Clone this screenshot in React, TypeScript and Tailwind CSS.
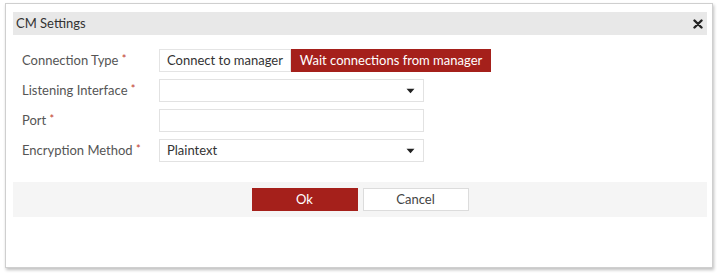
import React from 'react'

function Caret() {
  return (
    <svg width="9" height="6" viewBox="0 0 9 6" className="shrink-0">
      <path d="M0.5 0.8 L8.5 0.8 L4.5 5.2 Z" fill="#222" />
    </svg>
  )
}

function Label({ text }: { text: string }) {
  return (
    <div className="w-[146px] shrink-0 pl-[9px] text-[13px] text-[#555]">
      {text} <span className="text-[#c0392b] text-[11px] relative -top-[2px]">*</span>
    </div>
  )
}

export default function App() {
  return (
    <div className="w-[720px] h-[275px] bg-white pt-[3px] pl-[5px]" style={{ fontFamily: 'Lato, "Open Sans", sans-serif' }}>
      <div className="w-[708px] h-[265px] border border-[#cfcfcf] bg-white shadow-[1px_2px_3px_rgba(0,0,0,0.25)] pl-[7px] pr-[5px] pt-[8px]">
        {/* header */}
        <div className="h-[23px] bg-[#e8e8e8] flex items-center justify-between pl-[3px] pr-[4px]">
          <span className="text-[13px] text-[#333]">CM Settings</span>
          <svg width="10" height="10" viewBox="0 0 10 10">
            <path d="M1.5 1.5 L8.5 8.5 M8.5 1.5 L1.5 8.5" stroke="#222" strokeWidth="2.4" strokeLinecap="round" />
          </svg>
        </div>

        {/* form */}
        <div className="flex flex-col gap-[7px] pt-[14px]">
          <div className="flex items-center h-[23px]">
            <Label text="Connection Type" />
            <div className="flex h-[23px] text-[13px]">
              <div className="w-[132px] border border-[#e4e4e4] bg-white text-[#333] flex items-center justify-center">
                Connect to manager
              </div>
              <div className="w-[200px] bg-[#a5201b] text-white flex items-center justify-center">
                Wait connections from manager
              </div>
            </div>
          </div>

          <div className="flex items-center h-[23px]">
            <Label text="Listening Interface" />
            <div className="w-[265px] h-[23px] border border-[#e2e2e2] flex items-center justify-end pr-[8px]">
              <Caret />
            </div>
          </div>

          <div className="flex items-center h-[23px]">
            <Label text="Port" />
            <div className="w-[265px] h-[23px] border border-[#e2e2e2]" />
          </div>

          <div className="flex items-center h-[23px]">
            <Label text="Encryption Method" />
            <div className="w-[265px] h-[23px] border border-[#e2e2e2] flex items-center justify-between pl-[7px] pr-[8px] text-[13px] text-[#333]">
              <span>Plaintext</span>
              <Caret />
            </div>
          </div>
        </div>

        {/* footer */}
        <div className="mt-[20px] h-[35px] bg-[#f5f5f5] flex items-center justify-center gap-[5px]">
          <button className="w-[106px] h-[23px] bg-[#a5201b] text-white text-[13px]">Ok</button>
          <button className="w-[106px] h-[23px] bg-white border border-[#dcdcdc] text-[#444] text-[13px]">Cancel</button>
        </div>
      </div>
    </div>
  )
}
